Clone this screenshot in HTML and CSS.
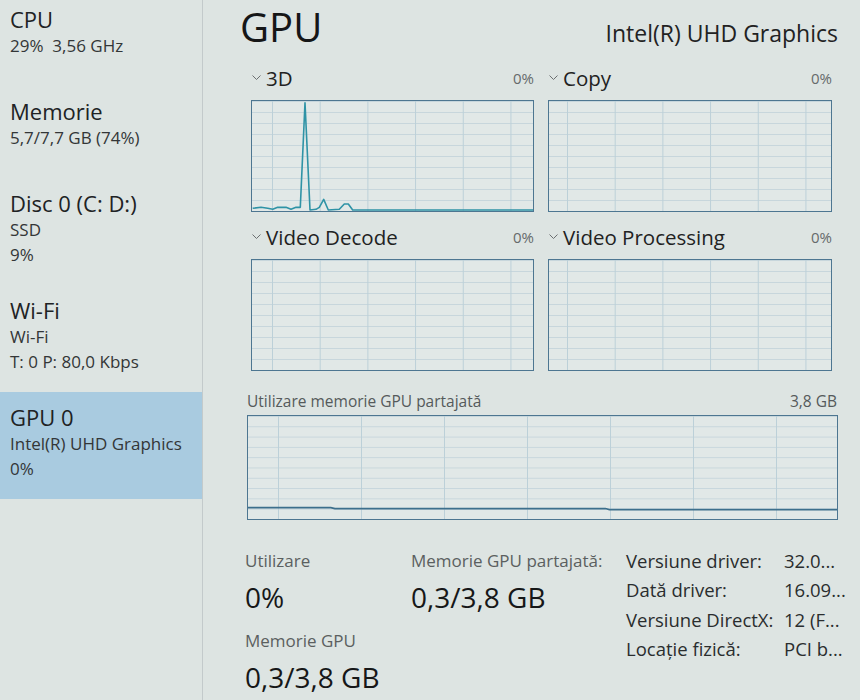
FILE: index.html
```html
<!DOCTYPE html>
<html lang="ro">
<head>
<meta charset="utf-8">
<title>Task Manager - GPU</title>
<link rel="stylesheet" href="styles.css">
</head>
<body>
<div class="app">
  <aside class="sidebar">
    <div class="item">
      <div class="title">CPU</div>
      <div class="sub">29%&nbsp; 3,56 GHz</div>
    </div>
    <div class="item">
      <div class="title">Memorie</div>
      <div class="sub">5,7/7,7 GB (74%)</div>
    </div>
    <div class="item">
      <div class="title">Disc 0 (C: D:)</div>
      <div class="sub">SSD</div>
      <div class="sub">9%</div>
    </div>
    <div class="item">
      <div class="title">Wi-Fi</div>
      <div class="sub">Wi-Fi</div>
      <div class="sub">T: 0 P: 80,0 Kbps</div>
    </div>
    <div class="item selected">
      <div class="title">GPU 0</div>
      <div class="sub">Intel(R) UHD Graphics</div>
      <div class="sub">0%</div>
    </div>
  </aside>

  <main class="main">
    <header class="head">
      <h1 class="heading">GPU</h1>
      <div class="model">Intel(R) UHD Graphics</div>
    </header>

    <section class="engines">
      <div class="engine">
        <div class="elabel">
          <svg class="chev" width="9" height="6" viewBox="0 0 9 6"><polyline points="0.5,0.5 4.5,4.5 8.5,0.5" fill="none" stroke="#6b6f70" stroke-width="1"/></svg>
          <span class="ename">3D</span>
          <span class="pct">0%</span>
        </div>
        <div class="graph g-small">
          <svg class="plot" viewBox="0 0 281 111" preserveAspectRatio="none">
            <polyline points="0.7,108.3 9,107.3 15.7,108.3 20.7,109.3 25.7,107.3 34,107.3 39,109.3 44,107.3 48.3,107.3 53,1.7 58,110 64,109.3 67.3,107.3 71.7,99.3 76.3,110 87.3,109.3 92.3,104 96.3,104 100.7,110 281,110" fill="none" stroke="#2f93a6" stroke-width="1.6" stroke-linejoin="round"/>
          </svg>
        </div>
      </div>
      <div class="engine">
        <div class="elabel">
          <svg class="chev" width="9" height="6" viewBox="0 0 9 6"><polyline points="0.5,0.5 4.5,4.5 8.5,0.5" fill="none" stroke="#6b6f70" stroke-width="1"/></svg>
          <span class="ename">Copy</span>
          <span class="pct">0%</span>
        </div>
        <div class="graph g-small g-copy"></div>
      </div>
      <div class="engine">
        <div class="elabel">
          <svg class="chev" width="9" height="6" viewBox="0 0 9 6"><polyline points="0.5,0.5 4.5,4.5 8.5,0.5" fill="none" stroke="#6b6f70" stroke-width="1"/></svg>
          <span class="ename">Video Decode</span>
          <span class="pct">0%</span>
        </div>
        <div class="graph g-small"></div>
      </div>
      <div class="engine">
        <div class="elabel">
          <svg class="chev" width="9" height="6" viewBox="0 0 9 6"><polyline points="0.5,0.5 4.5,4.5 8.5,0.5" fill="none" stroke="#6b6f70" stroke-width="1"/></svg>
          <span class="ename">Video Processing</span>
          <span class="pct">0%</span>
        </div>
        <div class="graph g-small g-copy"></div>
      </div>
    </section>

    <section class="shared">
      <div class="slabel">
        <span>Utilizare memorie GPU partajată</span>
        <span>3,8 GB</span>
      </div>
      <div class="graph g-wide">
        <svg class="plot" viewBox="0 0 590 104" preserveAspectRatio="none">
          <polyline points="0,92.5 83,92.5 87,93.5 358,93.5 362,94.5 590,94.5" fill="none" stroke="#3d6f8c" stroke-width="1.6"/>
        </svg>
      </div>
    </section>

    <section class="stats">
      <div class="col col-a">
        <div class="stat">
          <div class="slbl">Utilizare</div>
          <div class="sval">0%</div>
        </div>
        <div class="stat">
          <div class="slbl">Memorie GPU</div>
          <div class="sval">0,3/3,8 GB</div>
        </div>
      </div>
      <div class="col col-b">
        <div class="stat">
          <div class="slbl">Memorie GPU partajată:</div>
          <div class="sval">0,3/3,8 GB</div>
        </div>
      </div>
      <div class="props">
        <span class="pk">Versiune driver:</span><span class="pv">32.0...</span>
        <span class="pk">Dată driver:</span><span class="pv">16.09...</span>
        <span class="pk">Versiune DirectX:</span><span class="pv">12 (F...</span>
        <span class="pk">Locație fizică:</span><span class="pv">PCI b...</span>
      </div>
    </section>
  </main>
</div>
</body>
</html>
```

FILE: styles.css
```css
* { box-sizing: border-box; }

html, body {
  margin: 0;
  padding: 0;
  width: 860px;
  height: 700px;
  overflow: hidden;
  background: #dde4e2;
  font-family: "Open Sans", "Noto Sans", "DejaVu Sans", sans-serif;
  color: #1d1f20;
}

.app {
  display: flex;
  width: 860px;
  height: 700px;
}

/* ---------- sidebar ---------- */
.sidebar {
  width: 203px;
  flex: none;
  border-right: 1px solid #c3cacb;
  margin-top: -6px;
}

.item {
  min-height: 92px;
  padding: 11px 0 18px 10px;
}

.item.selected {
  background: #a9cbe0;
}

.title {
  font-size: 22px;
  line-height: 28px;
  color: #202224;
}

.sub {
  font-size: 17px;
  line-height: 25px;
  color: #333637;
  white-space: nowrap;
}

/* ---------- main ---------- */
.main {
  flex: 1;
  min-width: 0;
  padding: 0 22px 0 37px;
}

.head {
  display: flex;
  justify-content: space-between;
  align-items: flex-start;
  height: 65px;
}

.heading {
  margin: 0;
  font-size: 40px;
  font-weight: 400;
  line-height: 54px;
  color: #151617;
}

.model {
  font-size: 23px;
  line-height: 30px;
  margin-top: 18px;
  color: #222;
}

.engines {
  display: grid;
  grid-template-columns: 283px 284px;
  column-gap: 14px;
  row-gap: 12px;
  padding-left: 11px;
}

.elabel {
  display: flex;
  align-items: center;
  height: 26px;
  margin-bottom: 9px;
}

.chev {
  flex: none;
  margin: 0 5px 0 1px;
}

.ename {
  font-size: 20.5px;
  color: #222;
}

.pct {
  margin-left: auto;
  font-size: 15px;
  color: #666a6b;
}

.graph {
  border: 1.5px solid #4d7691;
  background-color: #e1e8e7;
  background-image:
    linear-gradient(to right, #bcd0d8 1px, transparent 1px),
    linear-gradient(to bottom, #c7d6dc 1px, transparent 1px);
  background-position: 20px 0, 0 0;
}

.g-small {
  height: 112px;
  background-size: 47.7px 100%, 100% 11px;
}

.g-copy {
  background-position: 18px 0, 0 0;
}

.plot {
  display: block;
  width: 100%;
  height: 100%;
}

.shared {
  padding-left: 7px;
  margin-top: 20px;
}

.slabel {
  display: flex;
  justify-content: space-between;
  font-size: 15.5px;
  line-height: 20px;
  color: #555a5b;
  margin-bottom: 4px;
  padding-right: 1px;
}

.g-wide {
  height: 105px;
  background-size: 83px 100%, 100% 10.3px;
  background-position: 30px 0, 0 0;
}

/* ---------- stats ---------- */
.stats {
  display: flex;
  padding-left: 5px;
  margin-top: 30px;
}

.col-a { width: 166px; flex: none; }
.col-b { width: 215px; flex: none; }

.stat {
  margin-bottom: 13px;
}

.slbl {
  font-size: 17px;
  line-height: 22px;
  color: #5b5f60;
  white-space: nowrap;
}

.sval {
  font-size: 28px;
  line-height: 40px;
  margin-top: 5px;
  color: #161718;
  white-space: nowrap;
}

.props {
  flex: none;
  display: grid;
  grid-template-columns: 158px auto;
  grid-auto-rows: 29.3px;
  align-items: center;
  font-size: 18.5px;
  color: #2a2d2e;
  margin-top: -4px;
  white-space: nowrap;
}
```
